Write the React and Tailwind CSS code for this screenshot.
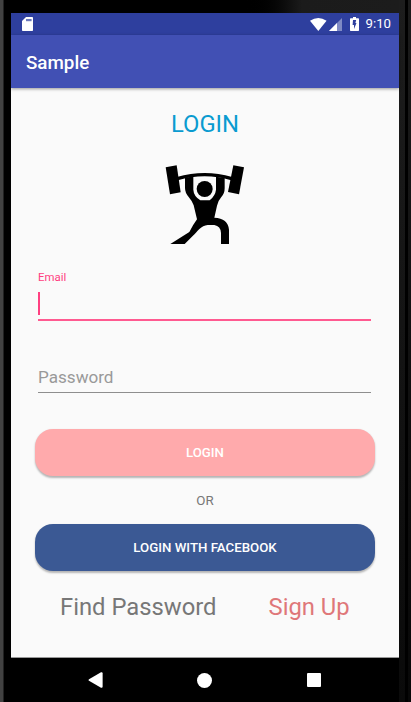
function StatusBar() {
  return (
    <div className="flex h-[22px] shrink-0 items-center bg-[#2e3f9e] pl-[11px] pr-2 text-white">
      <svg className="h-[14px] w-[11px]" viewBox="0 0 11 14">
        <path fill="currentColor" d="M4 0H10.2Q11 0 11 .8V13.2Q11 14 10.2 14H.8Q0 14 0 13.2V4Z" />
        <path fill="#6d79bb" d="M4 2H9.6V4.2H4Z" />
      </svg>
      <svg className="ml-auto h-[13px] w-[17px]" viewBox="0 0 17 13">
        <path fill="currentColor" d="M0 2.8Q8.3-2.8 16.6 2.8L8.3 13Z" />
      </svg>
      <svg className="ml-[2px] h-[13px] w-[13px]" viewBox="0 0 13 13">
        <path fill="#7f8ac4" d="M13 0V13H0Z" />
        <path fill="currentColor" d="M8 5V13H0Z" />
      </svg>
      <svg className="ml-2 h-[14px] w-[9px]" viewBox="0 0 9 14">
        <path fill="currentColor" d="M3 0H6V1.2H8.3Q9 1.2 9 2V13.2Q9 14 8.3 14H.7Q0 14 0 13.2V2Q0 1.2.7 1.2H3Z" />
        <path fill="#2e3f9e" d="M3 3H6.2L5.4 6H6.5L4 12V8H2.6Z" />
      </svg>
      <span className="ml-[7px] text-[13.2px] leading-[22px]">9:10</span>
    </div>
  );
}

function Weightlifter() {
  return (
    <svg className="mx-auto mt-[15px] h-[100px] w-[100px]" viewBox="0 0 300 300">
      <path d="M32 37L65 31L77 112L45 118Z" />
      <path d="M235 31L267 37L252 118L219 111Z" />
      <path fill="none" stroke="#000" strokeWidth="10" d="M67 71Q149 47 230 71" />
      <circle cx="149" cy="102" r="24" />
      <path d="M90 69L115 64V104Q116 123 136 136H164Q181 122 183 104V65L209 69V100Q209 116 199 126Q188 139 186 152L178 188Q219 190 222 224V267H198V234Q197 213 178 210H158C139 211 126 231 113 243L89 267H46L103 231Q115 208 126 193L116 151Q113 140 101 126Q90 113 90 99Z" />
    </svg>
  );
}

function NavigationBar() {
  return (
    <div className="flex h-[44px] shrink-0 items-center bg-black pl-[77px] text-white">
      <svg className="h-4 w-[15px]" viewBox="0 0 15 16">
        <path fill="currentColor" d="M1 7.2L13 .3Q14.6-.3 14.6 1.2V14.8Q14.6 16.3 13 15.7L1 8.8Q0 8 1 7.2Z" />
      </svg>
      <div className="ml-[94px] size-[15px] rounded-full bg-white" />
      <div className="ml-[95px] size-[14px] rounded-[1px] bg-white" />
    </div>
  );
}

export default function App() {
  return (
    <div className="flex h-[702px] w-[411px] overflow-hidden bg-black font-[Roboto,sans-serif]">
      <div className="w-[3px] shrink-0 bg-[#424242]" />
      <div className="w-px shrink-0 bg-[#222]" />
      <div className="w-[7px] shrink-0 bg-black" />
      <div className="flex w-[388px] shrink-0 flex-col">
        <div className="h-[13px] shrink-0 bg-linear-to-r from-black from-60% via-[#1b1b1b] via-75% to-[#1c1c1c]" />
        <StatusBar />
        <header className="z-10 flex h-[53px] shrink-0 items-center bg-[#4150b4] pt-[2px] pl-[15px] shadow-[0_1px_3px_rgba(0,0,0,0.4)]">
          <h1 className="text-[18.8px] leading-6 font-medium text-white">Sample</h1>
        </header>
        <main className="flex h-[570px] shrink-0 flex-col border-b border-[#999] bg-[#fafafa] px-6 pt-5">
          <h2 className="text-center text-[23.8px] leading-8 text-[#0a9bd0]">LOGIN</h2>
          <Weightlifter />
          <div className="mt-[14px] ml-[3px] mr-1 border-b-2 border-[#ff5a90]">
            <div className="text-[11.4px] leading-4 text-[#ff4081]">Email</div>
            <div className="mt-[7px] mb-[4px] h-[23px] w-[1.5px] bg-[#ff4081]" />
          </div>
          <div className="mt-[45px] ml-[3px] mr-1 h-[27px] border-b border-[#8e8e8e] text-[17.1px] leading-[22px] text-[#999]">
            Password
          </div>
          <button className="mt-9 h-[47px] shrink-0 rounded-[18px] bg-[#ffaaac] text-[13.2px] font-medium text-white shadow-[0_1.5px_2px_rgba(0,0,0,0.28)]">
            LOGIN
          </button>
          <div className="mt-[15px] mb-[13px] text-center text-[13.3px] leading-5 text-[#777]">OR</div>
          <button className="h-[47px] shrink-0 rounded-[18px] bg-[#3b5994] pt-px text-[13.25px] font-medium text-white shadow-[0_1.5px_2px_rgba(0,0,0,0.28)]">
            LOGIN WITH FACEBOOK
          </button>
          <div className="mt-5 flex pl-[25px] text-[23.8px] leading-8">
            <span className="w-[208.5px] text-[#777]">Find Password</span>
            <span className="whitespace-nowrap text-[#df7779]">Sign Up</span>
          </div>
        </main>
        <NavigationBar />
      </div>
      <div className="w-[6px] shrink-0 bg-linear-to-b from-[#1d1d1d] to-[#0a0a0a]" />
      <div className="w-[3px] shrink-0 bg-black" />
      <div className="w-[3px] shrink-0 bg-linear-to-b from-[#1b1b1b] to-[#080808]" />
    </div>
  );
}
